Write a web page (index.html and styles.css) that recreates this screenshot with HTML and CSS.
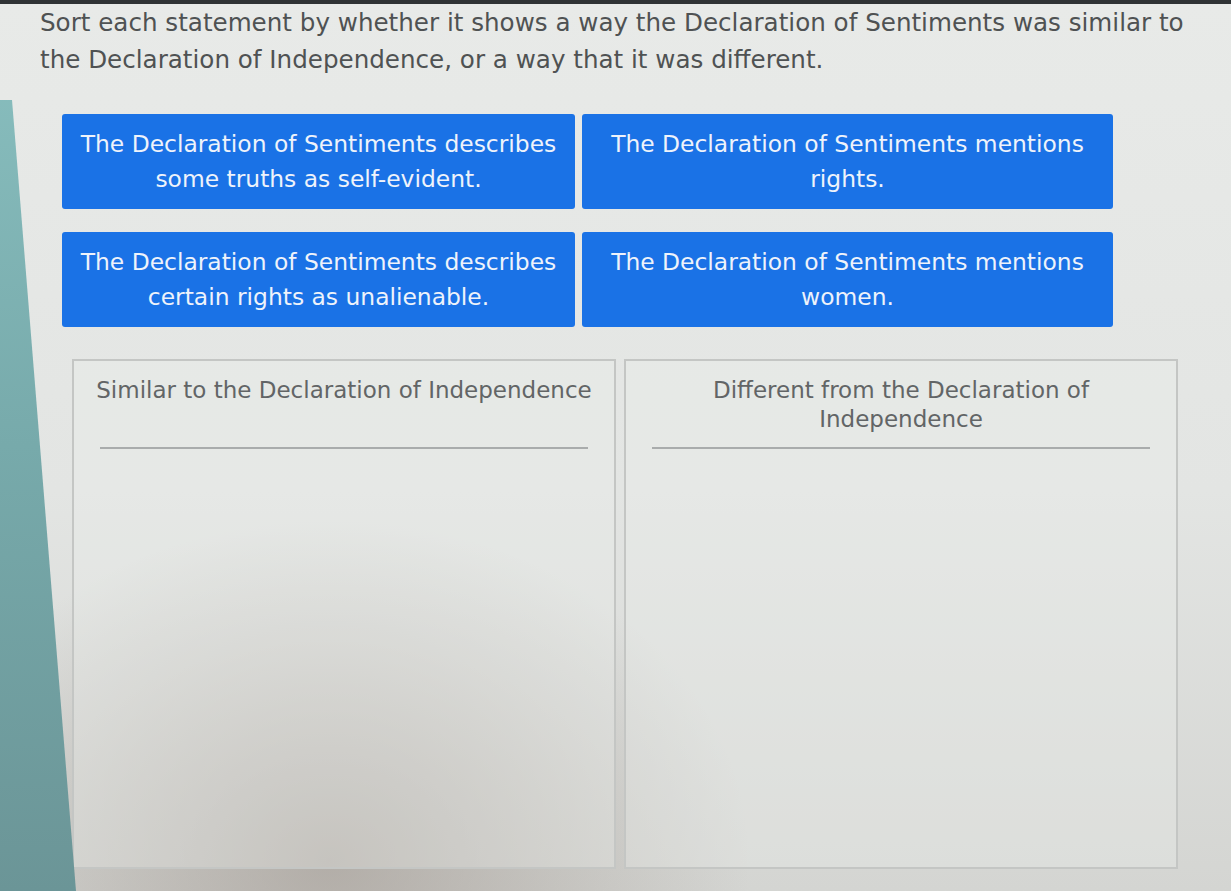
FILE: index.html
```html
<!DOCTYPE html>
<html lang="en">
<head>
	<meta charset="UTF-8">
	<title>Sort the statements</title>
	<link rel="stylesheet" href="styles.css">
</head>
<body>
	<div class="screen">
		<p class="prompt">Sort each statement by whether it shows a way the Declaration of Sentiments was similar to the Declaration of Independence, or a way that it was different.</p>

		<!-- draggable statements -->
		<div class="tiles">
			<div class="tile">The Declaration of Sentiments describes some truths as self-evident.</div>
			<div class="tile">The Declaration of Sentiments mentions rights.</div>
			<div class="tile">The Declaration of Sentiments describes certain rights as unalienable.</div>
			<div class="tile">The Declaration of Sentiments mentions women.</div>
		</div>

		<!-- drop targets -->
		<div class="bins">
			<div class="bin">
				<div class="bin-head">
					<div class="bin-title">Similar to the Declaration of Independence</div>
				</div>
				<div class="bin-rule"></div>
			</div>
			<div class="bin">
				<div class="bin-head">
					<div class="bin-title">Different from the Declaration of Independence</div>
				</div>
				<div class="bin-rule"></div>
			</div>
		</div>
	</div>
</body>
</html>
```

FILE: styles.css
```css
* {
	margin: 0;
	padding: 0;
	box-sizing: border-box;
}
html, body {
	height: 100%;
}
body {
	font-family: "DejaVu Sans", Verdana, sans-serif;
	background:
		radial-gradient(ellipse 420px 340px at 330px 860px, rgba(150, 140, 132, .55), rgba(150, 140, 132, 0)),
		linear-gradient(180deg, #e8eae8 0%, #e3e5e3 55%, #d4d5d2 100%);
	overflow: hidden;
}
/* teal desk edge showing past the monitor on the left */
body::before {
	content: "";
	position: fixed;
	left: 0;
	top: 0;
	width: 90px;
	height: 100%;
	background: linear-gradient(180deg, #8ac0c0 0%, #77aaab 50%, #6b9597 100%);
	clip-path: polygon(0 100px, 12px 100px, 76px 100%, 0 100%);
}
.screen {
	min-height: 100%;
	border-top: 4px solid #2f3335;
}
.prompt {
	padding: 0 40px;
	font-size: 24.6px;
	line-height: 37px;
	color: #4f5253;
}
.tiles {
	display: grid;
	grid-template-columns: 513px 531px;
	column-gap: 7px;
	row-gap: 23px;
	margin: 36px 0 0 62px;
}
.tile {
	display: flex;
	align-items: center;
	justify-content: center;
	height: 95px;
	padding: 0 12px;
	background-color: #1a72e6;
	border-radius: 3px;
	color: #eef3fb;
	font-size: 23.4px;
	line-height: 35px;
	text-align: center;
}
.bins {
	display: grid;
	grid-template-columns: 544px 554px;
	column-gap: 8px;
	margin: 32px 0 0 72px;
}
.bin {
	height: 510px;
	border: 2px solid #c4c6c4;
	background-color: rgba(236, 238, 236, .35);
}
.bin-head {
	height: 86px;
	padding: 15px 16px 0;
}
.bin-title {
	font-size: 23px;
	line-height: 29px;
	color: #626566;
	text-align: center;
}
.bin-rule {
	margin: 0 26px;
	border-top: 2px solid #a9acac;
}
```
